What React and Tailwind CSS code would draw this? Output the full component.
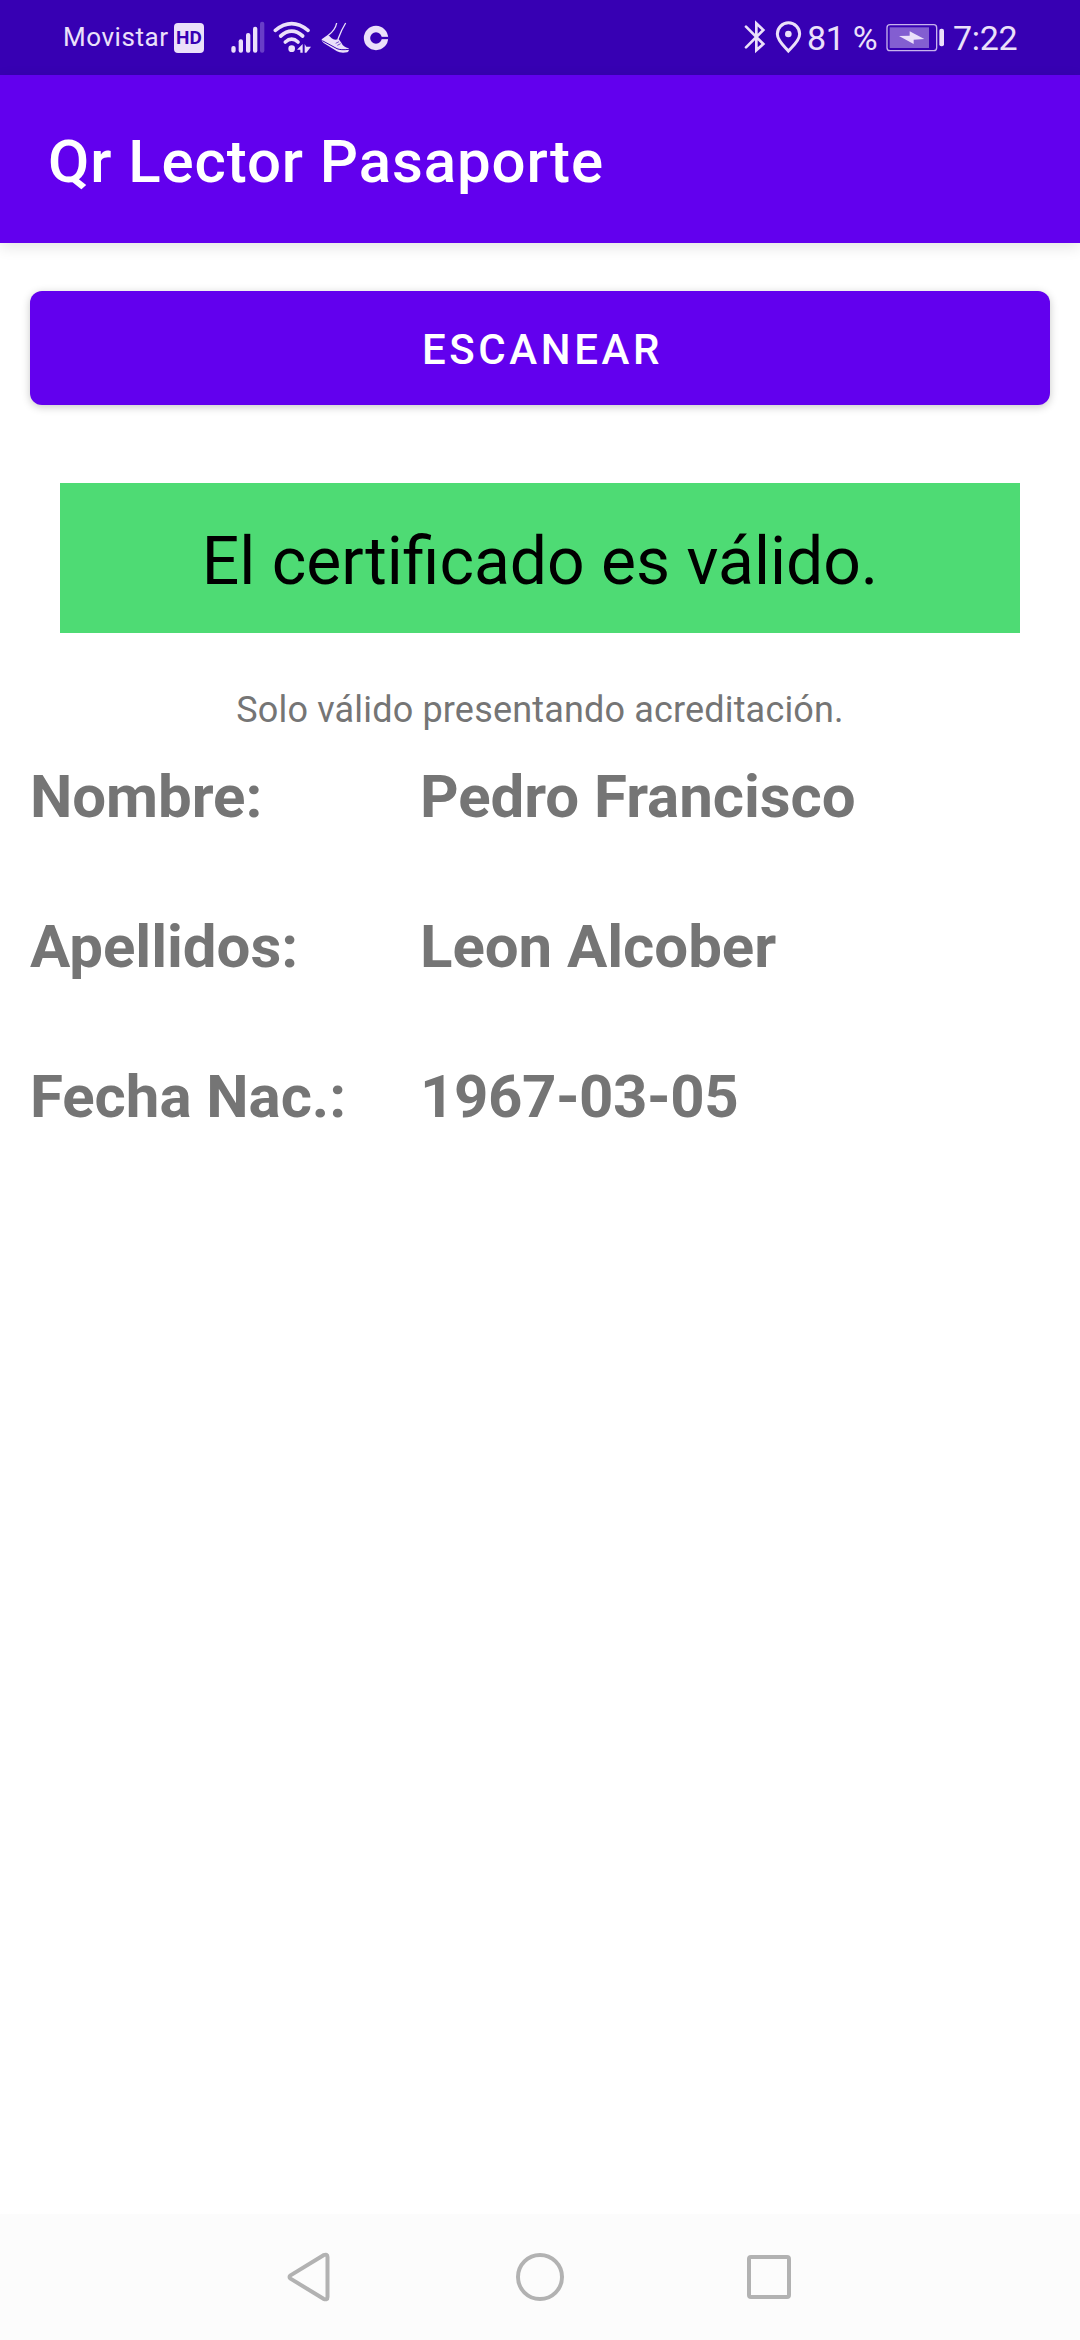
const PERSON = [
  { label: 'Nombre:', value: 'Pedro Francisco' },
  { label: 'Apellidos:', value: 'Leon Alcober' },
  { label: 'Fecha Nac.:', value: '1967-03-05', numeric: true },
];

export default function App() {
  return (
    <div className="flex flex-col w-[1080px] h-[2340px] overflow-hidden bg-white font-['Roboto',sans-serif]">
      <StatusBar />
      <AppBar title="Qr Lector Pasaporte" />

      <main className="flex-1 px-[30px] pt-12">
        <button className="block w-full h-[114px] pt-[3px] pl-[5px] rounded-xl bg-[#6200ee] text-white text-[42px] font-medium tracking-[3.6px] shadow-[0_2px_8px_rgba(0,0,0,0.22)]">
          ESCANEAR
        </button>

        <div className="mx-[30px] mt-[78px] h-[150px] pt-[7px] flex items-center justify-center bg-[#4edb74] text-black text-[66px]">
          El certificado es válido.
        </div>

        <p className="mt-[56px] h-[42px] leading-[42px] text-center text-[36px] tracking-[0.17px] text-[#757575]">
          Solo válido presentando acreditación.
        </p>

        <dl className="mt-[31px]">
          {PERSON.map((row) => (
            <Field key={row.label} {...row} />
          ))}
        </dl>
      </main>

      <NavBar />
    </div>
  );
}

function AppBar({ title }) {
  return (
    <header className="relative flex items-center h-[168px] px-12 pt-[5px] bg-[#6200ee] shadow-[0_4px_14px_rgba(0,0,0,0.11)]">
      <h1 className="text-white text-[60px] font-medium tracking-[0.9px]">{title}</h1>
    </header>
  );
}

function Field({ label, value, numeric }) {
  return (
    <div className="flex h-[150px] leading-[70px] text-[60px] font-bold text-[#757575]">
      <dt className="w-[390px] tracking-[-0.05px]">{label}</dt>
      <dd className={numeric ? 'tracking-[-0.45px]' : 'tracking-[-0.05px]'}>{value}</dd>
    </div>
  );
}

function StatusBar() {
  return (
    <div className="flex items-center h-[75px] pl-[63px] pr-[62px] bg-[#3700b3] text-[#ebe0fa]">
      <span className="w-[111px] text-[26px] tracking-[0.55px] whitespace-nowrap">Movistar</span>
      <span className="flex items-center justify-center w-[30px] h-[30px] pt-px rounded bg-[#ebe0fa] text-[#3700b3] text-[19px] font-bold">
        HD
      </span>
      <SignalIcon />
      <WifiIcon />
      <ShoeIcon />
      <RingIcon />
      <div className="flex items-center ml-auto">
        <BluetoothIcon />
        <PinIcon />
        <span className="w-[79px] pt-px text-[34px] tracking-[-0.3px] whitespace-nowrap">81 %</span>
        <BatteryIcon />
        <span className="w-[65px] pt-px text-[34px] tracking-[-0.3px] whitespace-nowrap">7:22</span>
      </div>
    </div>
  );
}

function SignalIcon() {
  return (
    <svg className="ml-[27px] w-[34px] h-[75px]" viewBox="48 0 102 225" fill="currentColor">
      <rect x="49" y="138" width="13" height="20" rx="6" />
      <rect x="71" y="118" width="13" height="40" rx="6" />
      <rect x="93" y="99" width="13" height="59" rx="6" />
      <rect x="114" y="80" width="13" height="78" rx="6" />
      <rect x="135" y="65" width="13" height="93" rx="6" opacity="0.28" />
    </svg>
  );
}

function WifiIcon() {
  return (
    <svg className="ml-2 w-[38px] h-[75px]" viewBox="174 0 114 225" fill="none" stroke="currentColor" strokeWidth="11" strokeLinecap="round">
      <path d="M181 91 Q230 51 279 91" />
      <path d="M197 108 Q230 79 263 108" />
      <path d="M211 126 Q230 109 249 126" />
      <circle cx="230" cy="146" r="10" fill="currentColor" stroke="none" />
      <path d="M246 149 L263 132 V158 H256 V149 Z M269 132 L274 140 H288 L274 158 H269 Z" fill="currentColor" stroke="none" />
    </svg>
  );
}

function ShoeIcon() {
  return (
    <svg className="ml-[9px] w-[30px] h-[75px]" viewBox="315 0 90 225" fill="none">
      <path d="M365 69 Q361 90 340 106 M392 69 Q380 88 369 117" stroke="currentColor" strokeWidth="4" />
      <path d="M339 104 L320 118 Q319 125 326 129 L366 154 Q376 160 397 157 Q404 153 401 145 Q385 142 378 127 L370 116 Q360 123 350 115 Z" fill="currentColor" />
      <path d="M322 122 L366 146 Q377 151 402 148" stroke="#3700b3" strokeWidth="3" />
      <path d="M362 130 L372 125 M367 136 L377 131" stroke="#3700b3" strokeWidth="2" />
    </svg>
  );
}

function RingIcon() {
  return (
    <svg className="ml-[13px] w-[26px] h-[75px]" viewBox="447 0 78 225" fill="none">
      <circle cx="486" cy="114" r="27" stroke="currentColor" strokeWidth="19" />
      <path d="M498 114 H524" stroke="#3700b3" strokeWidth="7" />
    </svg>
  );
}

function BluetoothIcon() {
  return (
    <svg className="w-[22px] h-[75px]" viewBox="40 0 66 225" fill="none" stroke="currentColor" strokeWidth="8">
      <path d="M46 80 L98 132 L77 151 V70 L98 90 L46 142" strokeLinecap="round" />
    </svg>
  );
}

function PinIcon() {
  return (
    <svg className="ml-[9px] mr-[5px] w-[27px] h-[75px]" viewBox="134 0 81 225" fill="none">
      <path d="M174 153 C162 139 141 122 141 102 A33 33 0 0 1 208 102 C208 122 187 139 174 153 Z" stroke="currentColor" strokeWidth="9" />
      <circle cx="174" cy="102" r="10" fill="currentColor" />
    </svg>
  );
}

function BatteryIcon() {
  return (
    <svg className="mr-[8px] w-[59px] h-[75px]" viewBox="48 0 177 225" fill="currentColor">
      <rect x="51" y="74" width="149" height="78" rx="9" fill="none" stroke="currentColor" strokeWidth="4" opacity="0.8" />
      <rect x="59" y="82" width="118" height="62" opacity="0.42" />
      <rect x="208" y="86" width="14" height="53" rx="6" />
      <path d="M87 108 L119 107 V94 L163 117 L131 119 V132 Z" />
    </svg>
  );
}

function NavBar() {
  return (
    <nav className="flex items-center justify-center gap-[182px] h-[126px] bg-[#fcfcfc] text-[#b2b2b2]">
      <svg className="w-12 h-[50px]" viewBox="1.5 0 48 50" fill="none" stroke="currentColor" strokeWidth="4" strokeLinejoin="round">
        <path d="M6 23.4 L39 3.2 Q43 1.5 43 5 V45 Q43 48.5 39 46.8 L6 26.6 Q4 25 6 23.4 Z" />
      </svg>
      <svg className="w-12 h-[50px]" viewBox="0 0 48 50" fill="none" stroke="currentColor" strokeWidth="4">
        <circle cx="24" cy="25" r="22" />
      </svg>
      <svg className="w-12 h-[50px]" viewBox="1 0 48 50" fill="none" stroke="currentColor" strokeWidth="4">
        <rect x="4" y="5" width="40" height="40" rx="2" />
      </svg>
    </nav>
  );
}
